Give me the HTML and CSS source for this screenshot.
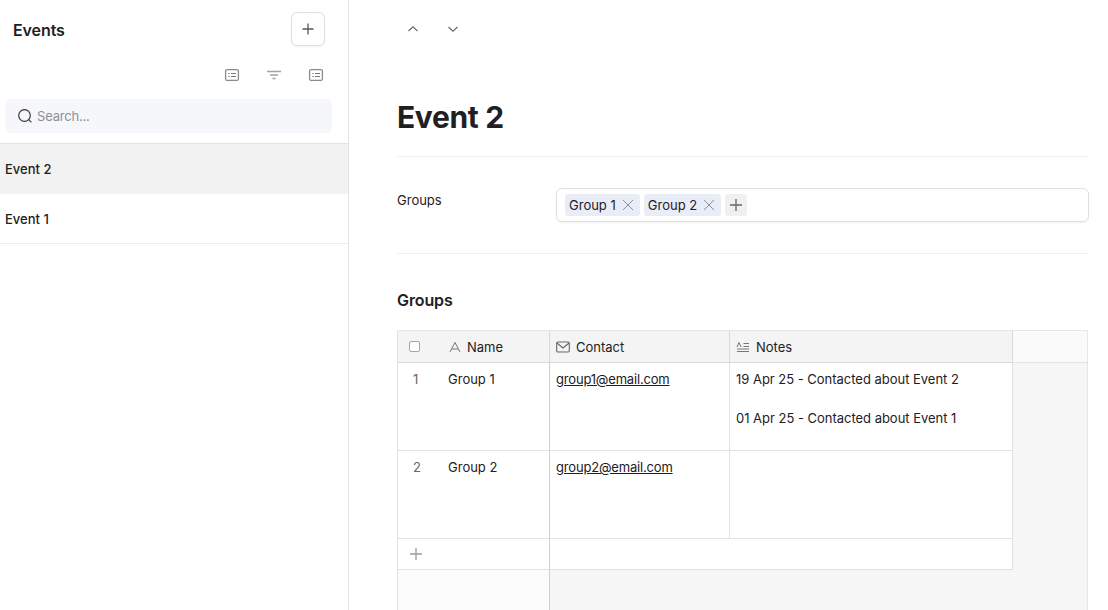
FILE: index.html
```html
<!DOCTYPE html>
<html lang="en">
<head>
    <meta charset="UTF-8">
    <meta name="viewport" content="width=device-width, initial-scale=1.0">
    <title>Events</title>
    <link rel="stylesheet" href="styles.css">
</head>
<body>

    <aside class="sidebar">
        <div class="sidebar-head">
            <h2>Events</h2>
            <button class="add-btn">
                <svg width="16" height="16" viewBox="0 0 16 16"><path d="M8 2.5v11M2.5 8h11" stroke="#55565b" stroke-width="1.3" fill="none"/></svg>
            </button>
        </div>
        <div class="toolbar">
            <svg width="16" height="14" viewBox="0 0 16 14"><rect x="1.6" y="1.6" width="12.8" height="10.8" rx="1.5" stroke="#8b8b8f" stroke-width="1.3" fill="none"/><path d="M4.3 5.5h1.4M7 5.5h5M4.3 8.5h1.4M7 8.5h5" stroke="#77777b" fill="none"/></svg>
            <svg width="16" height="14" viewBox="0 0 16 14"><path d="M1 3.5h14M4 7h8M6.5 10.5h3" stroke="#a2a2a6" stroke-width="1.3" fill="none"/></svg>
            <svg width="16" height="14" viewBox="0 0 16 14"><rect x="1.6" y="1.6" width="12.8" height="10.8" rx="1.5" stroke="#8b8b8f" stroke-width="1.3" fill="none"/><path d="M4.3 5.5h1.4M7 5.5h5M4.3 8.5h1.4M7 8.5h5" stroke="#77777b" fill="none"/></svg>
        </div>
        <div class="search">
            <svg width="16" height="16" viewBox="0 0 16 16"><circle cx="7.5" cy="7.5" r="5.8" stroke="#3a3a3e" stroke-width="1.2" fill="none"/><path d="M11.7 11.7l2.7 2.7" stroke="#3a3a3e" stroke-width="1.2" fill="none"/></svg>
            <span>Search...</span>
        </div>
        <div class="event-list">
            <div class="event-item active">Event 2</div>
            <div class="event-item">Event 1</div>
        </div>
    </aside>

    <main class="content">
        <div class="nav-arrows">
            <svg width="12" height="8" viewBox="0 0 12 8"><path d="M1.5 6L6 1.8 10.5 6" stroke="#66666a" stroke-width="1.1" fill="none"/></svg>
            <svg width="12" height="8" viewBox="0 0 12 8"><path d="M1.5 2L6 6.2 10.5 2" stroke="#66666a" stroke-width="1.1" fill="none"/></svg>
        </div>

        <h1>Event 2</h1>

        <div class="field">
            <label>Groups</label>
            <div class="tag-input">
                <span class="tag">Group 1
                    <svg width="12" height="12" viewBox="0 0 12 12"><path d="M1 1l10 10M11 1L1 11" stroke="#8e8f96" fill="none"/></svg>
                </span>
                <span class="tag">Group 2
                    <svg width="12" height="12" viewBox="0 0 12 12"><path d="M1 1l10 10M11 1L1 11" stroke="#8e8f96" fill="none"/></svg>
                </span>
                <span class="tag-add">
                    <svg width="14" height="14" viewBox="0 0 14 14"><path d="M7 1v12M1 7h12" stroke="#66666a" stroke-width="1.3" fill="none"/></svg>
                </span>
            </div>
        </div>

        <h3>Groups</h3>

        <div class="table">
            <div class="row head">
                <div class="cell first">
                    <span class="checkbox"></span>
                    <span class="name-head">
                        <svg width="12" height="12" viewBox="0 0 12 12"><path d="M1 11L6 1.5 11 11M3 8h6" stroke="#77777b" fill="none"/></svg>
                        Name
                    </span>
                </div>
                <div class="cell contact">
                    <svg width="14" height="12" viewBox="0 0 14 12"><rect x="0.7" y="1" width="12.6" height="10" rx="1.2" stroke="#66666a" stroke-width="1.1" fill="none"/><path d="M1 2l6 5 6-5" stroke="#66666a" stroke-width="1.1" fill="none"/></svg>
                    Contact
                </div>
                <div class="cell notes">
                    <svg width="14" height="12" viewBox="0 0 14 12"><path d="M1 6l2-4.5L5 6M7.5 2.5h5.5M7.5 5.5h5.5M1 8h12M1 10.5h12" stroke="#77777b" fill="none"/></svg>
                    Notes
                </div>
            </div>

            <div class="row data">
                <div class="cell first">
                    <span class="row-num">1</span>
                    <span>Group 1</span>
                </div>
                <div class="cell contact"><a href="#">group1@email.com</a></div>
                <div class="cell notes">
                    <p>19 Apr 25 - Contacted about Event 2</p>
                    <p>01 Apr 25 - Contacted about Event 1</p>
                </div>
            </div>

            <div class="row data">
                <div class="cell first">
                    <span class="row-num">2</span>
                    <span>Group 2</span>
                </div>
                <div class="cell contact"><a href="#">group2@email.com</a></div>
                <div class="cell notes"></div>
            </div>

            <div class="row add">
                <div class="cell first">
                    <svg width="14" height="14" viewBox="0 0 14 14"><path d="M7 1v12M1 7h12" stroke="#9a9a9e" stroke-width="1.3" fill="none"/></svg>
                </div>
                <div class="cell rest"></div>
            </div>

            <div class="row footer">
                <div class="cell first"></div>
            </div>
        </div>
    </main>

</body>
</html>
```

FILE: styles.css
```css
* {
    margin: 0;
    padding: 0;
    box-sizing: border-box;
}

body {
    background-color: white;
    color: #1f2023;
    font-family: Inter, "Liberation Sans", sans-serif;
    font-size: 13px;
    display: flex;
    height: 100vh;
    overflow: hidden;
}

/* Sidebar */
.sidebar {
    width: 349px;
    flex-shrink: 0;
    border-right: 1px solid #e3e3e6;
}

.sidebar-head {
    display: flex;
    justify-content: space-between;
    align-items: center;
    padding: 12px 23px 0 13px;
}

.sidebar-head h2 {
    font-size: 16px;
    font-weight: 600;
    letter-spacing: -0.1px;
    margin-top: 2px;
}

.add-btn {
    width: 34px;
    height: 34px;
    display: flex;
    align-items: center;
    justify-content: center;
    background: white;
    border: 1px solid #dfdfe2;
    border-radius: 6px;
    box-shadow: 0 1px 2px rgba(0, 0, 0, 0.06);
}

.toolbar {
    display: flex;
    justify-content: flex-end;
    gap: 26px;
    padding: 22px 24px 0 0;
    height: 53px;
}

.search {
    display: flex;
    align-items: center;
    gap: 4px;
    height: 34px;
    margin: 0 16px 0 5px;
    padding-left: 12px;
    background-color: #f6f7fb;
    border-radius: 6px;
    color: #8e8f95;
    letter-spacing: -0.2px;
}

.event-list {
    margin-top: 10px;
}

.event-item {
    height: 50px;
    display: flex;
    align-items: center;
    padding-left: 5px;
    font-weight: 500;
    border-bottom: 1px solid #ececee;
}

.event-item.active {
    height: 51px;
    background-color: #f2f2f2;
    border-top: 1px solid #e3e3e6;
    border-bottom: none;
}

/* Main */
.content {
    flex: 1;
    padding: 0 20px 0 48px;
}

.nav-arrows {
    display: flex;
    gap: 28px;
    padding: 25px 0 0 10px;
    height: 71px;
}

h1 {
    font-size: 30px;
    font-weight: 700;
    letter-spacing: -0.35px;
    line-height: 40px;
    height: 86px;
    padding-top: 26px;
    border-bottom: 1px solid #eeeeef;
}

.field {
    display: flex;
    height: 97px;
    padding-top: 31px;
    border-bottom: 1px solid #eeeeef;
}

.field label {
    width: 159px;
    line-height: 24px;
    flex-shrink: 0;
}

.tag-input {
    flex: 1;
    height: 34px;
    display: flex;
    align-items: center;
    gap: 4px;
    padding-left: 8px;
    border: 1px solid #dfdfe2;
    border-radius: 6px;
    box-shadow: 0 1px 2px rgba(0, 0, 0, 0.06);
    margin-right: -1px;
}

.tag {
    display: flex;
    align-items: center;
    gap: 6px;
    height: 22px;
    padding: 0 6px 0 4px;
    background-color: #e9edf7;
    border-radius: 3px;
}

.tag-add {
    width: 22px;
    height: 22px;
    display: flex;
    align-items: center;
    justify-content: center;
    background-color: #f0f0f1;
    border-radius: 3px;
}

h3 {
    font-size: 16px;
    font-weight: 600;
    letter-spacing: -0.1px;
    line-height: 20px;
    padding-top: 36px;
    height: 76px;
}

/* Table */
.table {
    border-top: 1px solid #e6e6e8;
    border-left: 1px solid #e3e3e5;
    border-right: 1px solid #e6e6e8;
    background-color: #f6f6f6;
    height: 300px;
}

.row {
    display: flex;
}

.cell {
    flex-shrink: 0;
    border-right: 1px solid #dfe1e5;
    border-bottom: 1px solid #dfe1e5;
    background-color: white;
}

.first {
    width: 152px;
    border-right-color: #cfcfd1;
}

.contact {
    width: 180px;
}

.notes {
    width: 283px;
}

.head {
    height: 32px;
    background-color: #fafafa;
    border-bottom: 1px solid #e3e3e5;
}

.head .cell {
    height: 32px;
    background-color: #f4f4f4;
    display: flex;
    align-items: center;
    padding-left: 6px;
    gap: 6px;
    border-color: #d9d9db;
}

.head .first {
    padding-left: 11px;
    gap: 0;
}

.checkbox {
    width: 11px;
    height: 11px;
    background: white;
    border: 1px solid #a6a6aa;
    border-radius: 2px;
    margin-top: -1px;
}

.name-head {
    display: flex;
    align-items: center;
    gap: 6px;
    margin-left: 29px;
}

.data {
    height: 88px;
}

.data .cell {
    padding: 6px 6px 0;
    line-height: 20px;
}

.data .first {
    display: flex;
    padding-left: 15px;
}

.row-num {
    width: 35px;
    color: #66666a;
}

.notes p {
    height: 39px;
    letter-spacing: -0.02px;
}

.contact a {
    color: #1f2023;
    text-decoration: underline;
    letter-spacing: -0.18px;
}

.add {
    height: 31px;
}

.add .first {
    display: flex;
    align-items: center;
    padding-left: 11px;
}

.rest {
    width: 463px;
}

.footer {
    height: 60px;
}

.footer .first {
    background-color: #fcfcfc;
    border-bottom: none;
    height: 60px;
}
```
